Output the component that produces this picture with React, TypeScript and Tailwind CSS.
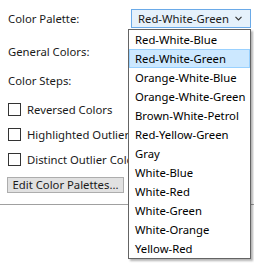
const palettes = [
  "Red-White-Blue",
  "Red-White-Green",
  "Orange-White-Blue",
  "Orange-White-Green",
  "Brown-White-Petrol",
  "Red-Yellow-Green",
  "Gray",
  "White-Blue",
  "White-Red",
  "White-Green",
  "White-Orange",
  "Yellow-Red",
];

const selected = "Red-White-Green";

const Checkbox = ({ label }: { label: string }) => (
  <div className="flex h-[25px] items-center whitespace-nowrap">
    <span className="ml-[8px] h-[13px] w-[13px] shrink-0 border border-[#333333] bg-white" />
    <span className="ml-[6px]">{label}</span>
  </div>
);

export default function App() {
  return (
    <div className="relative h-[264px] w-[254px] overflow-hidden bg-white font-['Noto_Sans',sans-serif] text-[11.3px] leading-[16px] text-[#1a1a1a]">
      <div className="flex h-[205px] flex-col border-b border-[#a0a0a0]">
        <div className="mt-[9px] flex h-[19px] items-center">
          <span className="ml-[8px]">Color Palette:</span>
          <div className="ml-auto mr-[3px] flex h-[19px] w-[120px] items-center border border-[#6aaae8] bg-[#e5f1fb] pl-[6px]">
            <span>{selected}</span>
            <svg
              className="ml-auto mr-[8px]"
              width="7"
              height="5"
              viewBox="0 0 7 5"
              fill="none"
            >
              <polyline
                points="0.5,0.8 3.5,3.8 6.5,0.8"
                stroke="#333"
                strokeWidth="1.2"
              />
            </svg>
          </div>
        </div>
        <div className="ml-[8px] mt-[16px]">General Colors:</div>
        <div className="ml-[8px] mt-[13px]">Color Steps:</div>
        <div className="mt-[8px]">
          <Checkbox label="Reversed Colors" />
          <Checkbox label="Highlighted Outliers" />
          <Checkbox label="Distinct Outlier Colors" />
        </div>
        <button className="ml-[7px] mt-[5px] flex h-[16px] w-[117px] items-center justify-center border border-[#adadad] bg-[#e1e1e1] leading-[14px]">
          Edit Color Palettes...
        </button>
      </div>

      <ul className="absolute left-[128px] top-[29px] w-[123px] border border-[#646464] bg-white shadow-[2px_2px_2px_rgba(0,0,0,0.3)]">
        {palettes.map((name) => (
          <li
            key={name}
            className={
              name === selected
                ? "flex h-[19px] items-center whitespace-nowrap border border-[#99d1ff] bg-[#cce8ff] pl-[5px] text-black"
                : "flex h-[19px] items-center whitespace-nowrap pl-[6px] text-black"
            }
          >
            {name}
          </li>
        ))}
      </ul>
    </div>
  );
}
